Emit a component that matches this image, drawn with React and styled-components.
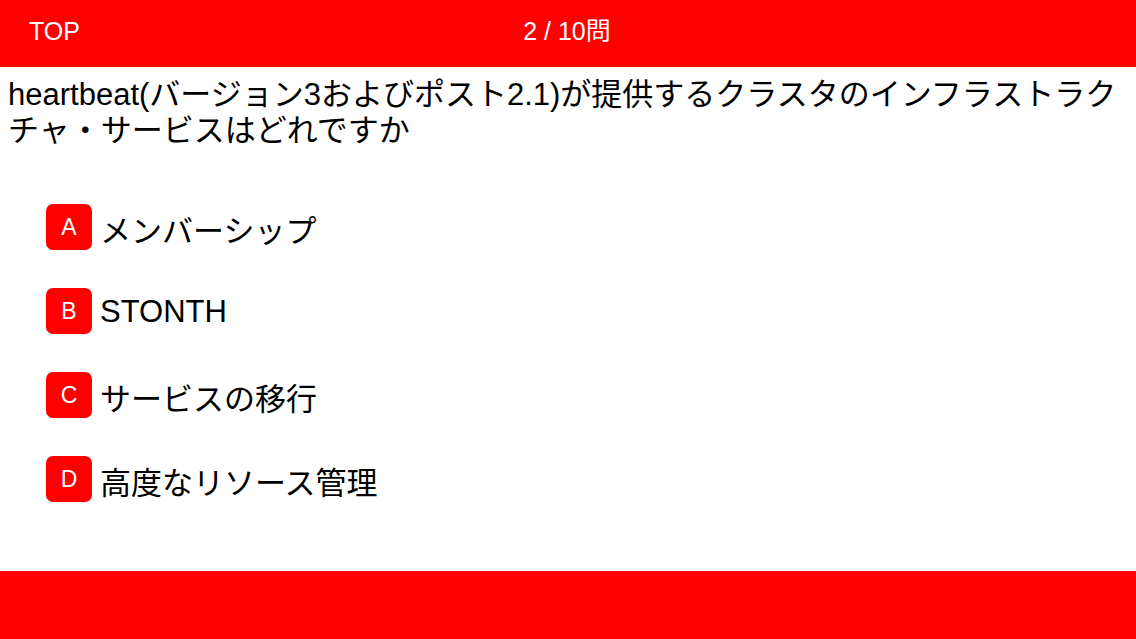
import React from 'react';
import styled, { createGlobalStyle } from 'styled-components';

const GlobalStyle = createGlobalStyle`
  html, body {
    margin: 0;
    padding: 0;
    background: #ffffff;
  }
  body {
    font-family: "Liberation Sans", "Noto Sans CJK JP", sans-serif;
  }
`;

const Page = styled.div`
  display: flex;
  flex-direction: column;
  height: 100vh;
  overflow: hidden;
`;

const Header = styled.header`
  flex: 0 0 67px;
  display: grid;
  grid-template-columns: 1fr auto 1fr;
  align-items: start;
  padding: 16px 29px 0;
  box-sizing: border-box;
  background: #ff0000;
  color: #ffffff;
  font-size: 25px;
  line-height: 30px;
`;

const TopLink = styled.div`
  justify-self: start;
`;

const Counter = styled.div`
  justify-self: center;
  padding-right: 2px;
`;

const Main = styled.main`
  flex: 1;
  display: flex;
  flex-direction: column;
`;

const Question = styled.div`
  margin: 10px 0 0;
  padding: 0 8px;
  font-size: 31px;
  line-height: 36px;
  color: #000000;
`;

const Options = styled.ul`
  list-style: none;
  margin: 55px 0 0;
  padding: 0 0 0 46px;
  display: flex;
  flex-direction: column;
  gap: 38px;
`;

const OptionRow = styled.li`
  display: flex;
  align-items: center;
  gap: 8px;
  height: 46px;
`;

const Badge = styled.span`
  flex: 0 0 46px;
  height: 46px;
  border-radius: 7px;
  background: #ff0000;
  color: #ffffff;
  font-size: 23px;
  display: flex;
  align-items: center;
  justify-content: center;
`;

const OptionText = styled.span`
  font-size: 31px;
  color: #000000;
  padding-top: 2px;
`;

const Footer = styled.footer`
  flex: 0 0 68px;
  background: #ff0000;
`;

const options = [
  { key: 'A', text: 'メンバーシップ' },
  { key: 'B', text: 'STONTH' },
  { key: 'C', text: 'サービスの移行' },
  { key: 'D', text: '高度なリソース管理' },
];

export default function App() {
  return (
    <>
      <GlobalStyle />
      <Page>
        <Header>
          <TopLink>TOP</TopLink>
          <Counter>2 / 10問</Counter>
          <div />
        </Header>
        <Main>
          <Question>
            heartbeat(バージョン3およびポスト2.1)が提供するクラスタのインフラストラクチャ・サービスはどれですか
          </Question>
          <Options>
            {options.map((o) => (
              <OptionRow key={o.key}>
                <Badge>{o.key}</Badge>
                <OptionText>{o.text}</OptionText>
              </OptionRow>
            ))}
          </Options>
        </Main>
        <Footer />
      </Page>
    </>
  );
}
